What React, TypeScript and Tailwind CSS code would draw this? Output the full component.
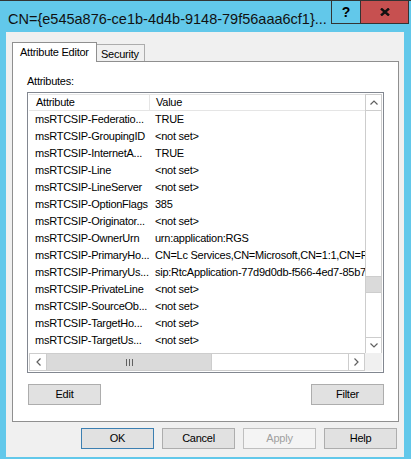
import React from 'react';

const rows: [string, string][] = [
  ['msRTCSIP-Federatio...', 'TRUE'],
  ['msRTCSIP-GroupingID', '<not set>'],
  ['msRTCSIP-InternetA...', 'TRUE'],
  ['msRTCSIP-Line', '<not set>'],
  ['msRTCSIP-LineServer', '<not set>'],
  ['msRTCSIP-OptionFlags', '385'],
  ['msRTCSIP-Originator...', '<not set>'],
  ['msRTCSIP-OwnerUrn', 'urn:application:RGS'],
  ['msRTCSIP-PrimaryHo...', 'CN=Lc Services,CN=Microsoft,CN=1:1,CN=RGS,CN=Application Contacts'],
  ['msRTCSIP-PrimaryUs...', 'sip:RtcApplication-77d9d0db-f566-4ed7-85b7-3c1e0a7f2d11@contoso.com'],
  ['msRTCSIP-PrivateLine', '<not set>'],
  ['msRTCSIP-SourceOb...', '<not set>'],
  ['msRTCSIP-TargetHo...', '<not set>'],
  ['msRTCSIP-TargetUs...', '<not set>'],
];

// small scrollbar arrows
const Arrow = ({ dir }: { dir: 'up' | 'down' | 'left' | 'right' }) => {
  if (dir === 'up' || dir === 'down') {
    return (
      <svg width="8" height="5" viewBox="0 0 8 5">
        <polyline
          points={dir === 'up' ? '0.5,4.5 4,1 7.5,4.5' : '0.5,0.5 4,4 7.5,0.5'}
          fill="none"
          stroke="#606060"
          strokeWidth="1.2"
        />
      </svg>
    );
  }
  return (
    <svg width="5" height="8" viewBox="0 0 5 8">
      <polyline
        points={dir === 'left' ? '4.5,0.5 1,4 4.5,7.5' : '0.5,0.5 4,4 0.5,7.5'}
        fill="none"
        stroke="#606060"
        strokeWidth="1.2"
      />
    </svg>
  );
};

const Button = ({ label, kind = 'normal' }: { label: string; kind?: 'normal' | 'default' | 'disabled' }) => {
  if (kind === 'default') {
    return (
      <div className="w-[73px] h-[21px] flex items-center justify-center border border-[#3c7fb1] bg-[#e1e1e1] text-black">
        {label}
      </div>
    );
  }
  if (kind === 'disabled') {
    return (
      <div className="w-[73px] h-[21px] flex items-center justify-center border border-[#bfbfbf] bg-[#f4f4f4] text-[#a0a0a0]">
        {label}
      </div>
    );
  }
  return (
    <div className="w-[73px] h-[21px] flex items-center justify-center border border-[#adadad] bg-[#e1e1e1] text-black">
      {label}
    </div>
  );
};

export default function App() {
  return (
    <div className="w-[411px] h-[459px] flex flex-col bg-[#62c8ea] border-t border-[#333333] font-['Liberation_Sans',Arial,sans-serif] text-black overflow-hidden">
      {/* Title bar */}
      <div className="h-[31px] flex items-start shrink-0">
        <div className="flex-1 pl-[8px] pt-[9px] text-[14.5px] leading-[18px] whitespace-nowrap overflow-hidden text-[#111111]">
          CN={'{'}e545a876-ce1b-4d4b-9148-79f56aaa6cf1{'}'}...
        </div>
        <div className="w-[29px] h-[23px] flex items-center justify-center border-l border-b border-[#333333] text-[14px] font-bold leading-none">
          ?
        </div>
        <div className="w-[49px] h-[23px] flex items-center justify-center bg-[#c75050] border-x border-b border-[#333333]">
          <svg width="10" height="8" viewBox="0 0 10 8">
            <path d="M1 0.5 L9 7.5 M9 0.5 L1 7.5" stroke="#111111" strokeWidth="2.4" />
          </svg>
        </div>
        <div className="w-[2px]" />
      </div>

      {/* Dialog body */}
      <div className="ml-[6px] mr-[7px] mb-[2px] h-[425px] bg-[#f0f0f0] flex flex-col text-[11px] tracking-[-0.25px]">
        {/* Tabs */}
        <div className="mt-[10px] h-[19px] pl-[6px] flex items-end">
          <div className="relative z-10 -mb-[1px] h-[20px] w-[85px] flex items-center pl-[7px] bg-white border-x border-t border-[#8f8f8f]">
            Attribute Editor
          </div>
          <div className="h-[17px] w-[48px] flex items-center pl-[4px] pt-[2px] border-t border-r border-[#acacac] bg-[#f0f0f0]">
            Security
          </div>
        </div>

        {/* Tab page */}
        <div className="ml-[6px] mr-[5px] h-[361px] bg-white border border-[#8f8f8f] pt-[12px] flex flex-col">
          <div className="pl-[14px] leading-[14px]">Attributes:</div>

          {/* List view */}
          <div className="mt-[4px] ml-[14px] w-[357px] h-[281px] border border-[#828790] p-[1px] flex flex-col">
            <div className="h-[259px] flex">
              <div className="flex-1 flex flex-col overflow-hidden">
                <div className="h-[17px] flex border-y border-[#e5e5e5] shrink-0">
                  <div className="w-[121px] shrink-0 pl-[7px] flex items-center border-r border-[#e5e5e5]">Attribute</div>
                  <div className="pl-[6px] flex items-center">Value</div>
                </div>
                {rows.map(([a, v]) => (
                  <div key={a} className="h-[17px] flex items-center shrink-0">
                    <div className="w-[121px] shrink-0 pl-[6px] whitespace-nowrap">{a}</div>
                    <div className="pl-[5px] whitespace-nowrap">{v}</div>
                  </div>
                ))}
              </div>
              {/* Vertical scrollbar */}
              <div className="w-[17px] flex flex-col border-x border-[#cdcdcd] bg-white">
                <div className="h-[17px] flex items-center justify-center border-y border-[#cdcdcd]">
                  <Arrow dir="up" />
                </div>
                <div className="flex-1">
                  <div className="mt-[165px] h-[17px] bg-[#dadada] border-y border-[#cdcdcd]" />
                </div>
                <div className="h-[16px] flex items-center justify-center border-t border-[#cdcdcd]">
                  <Arrow dir="down" />
                </div>
              </div>
            </div>

            {/* Horizontal scrollbar */}
            <div className="h-[18px] flex">
              <div className="w-[18px] flex items-center justify-center border border-[#cdcdcd] bg-white">
                <Arrow dir="left" />
              </div>
              <div className="w-[165px] flex items-center justify-center gap-[2px] bg-[#dadada] border-y border-r border-[#cdcdcd]">
                <div className="w-[1px] h-[7px] bg-[#606060]" />
                <div className="w-[1px] h-[7px] bg-[#606060]" />
                <div className="w-[1px] h-[7px] bg-[#606060]" />
              </div>
              <div className="flex-1 bg-white border-y border-[#cdcdcd]" />
              <div className="w-[17px] flex items-center justify-center border border-[#cdcdcd] bg-white">
                <Arrow dir="right" />
              </div>
              <div className="w-[17px] bg-[#f0f0f0]" />
            </div>
          </div>

          <div className="mt-[11px] pl-[15px] pr-[14px] flex justify-between">
            <Button label="Edit" />
            <Button label="Filter" />
          </div>
        </div>

        {/* Dialog buttons */}
        <div className="mt-[6px] pr-[7px] flex justify-end gap-[8px]">
          <Button label="OK" kind="default" />
          <Button label="Cancel" />
          <Button label="Apply" kind="disabled" />
          <Button label="Help" />
        </div>
      </div>
    </div>
  );
}
